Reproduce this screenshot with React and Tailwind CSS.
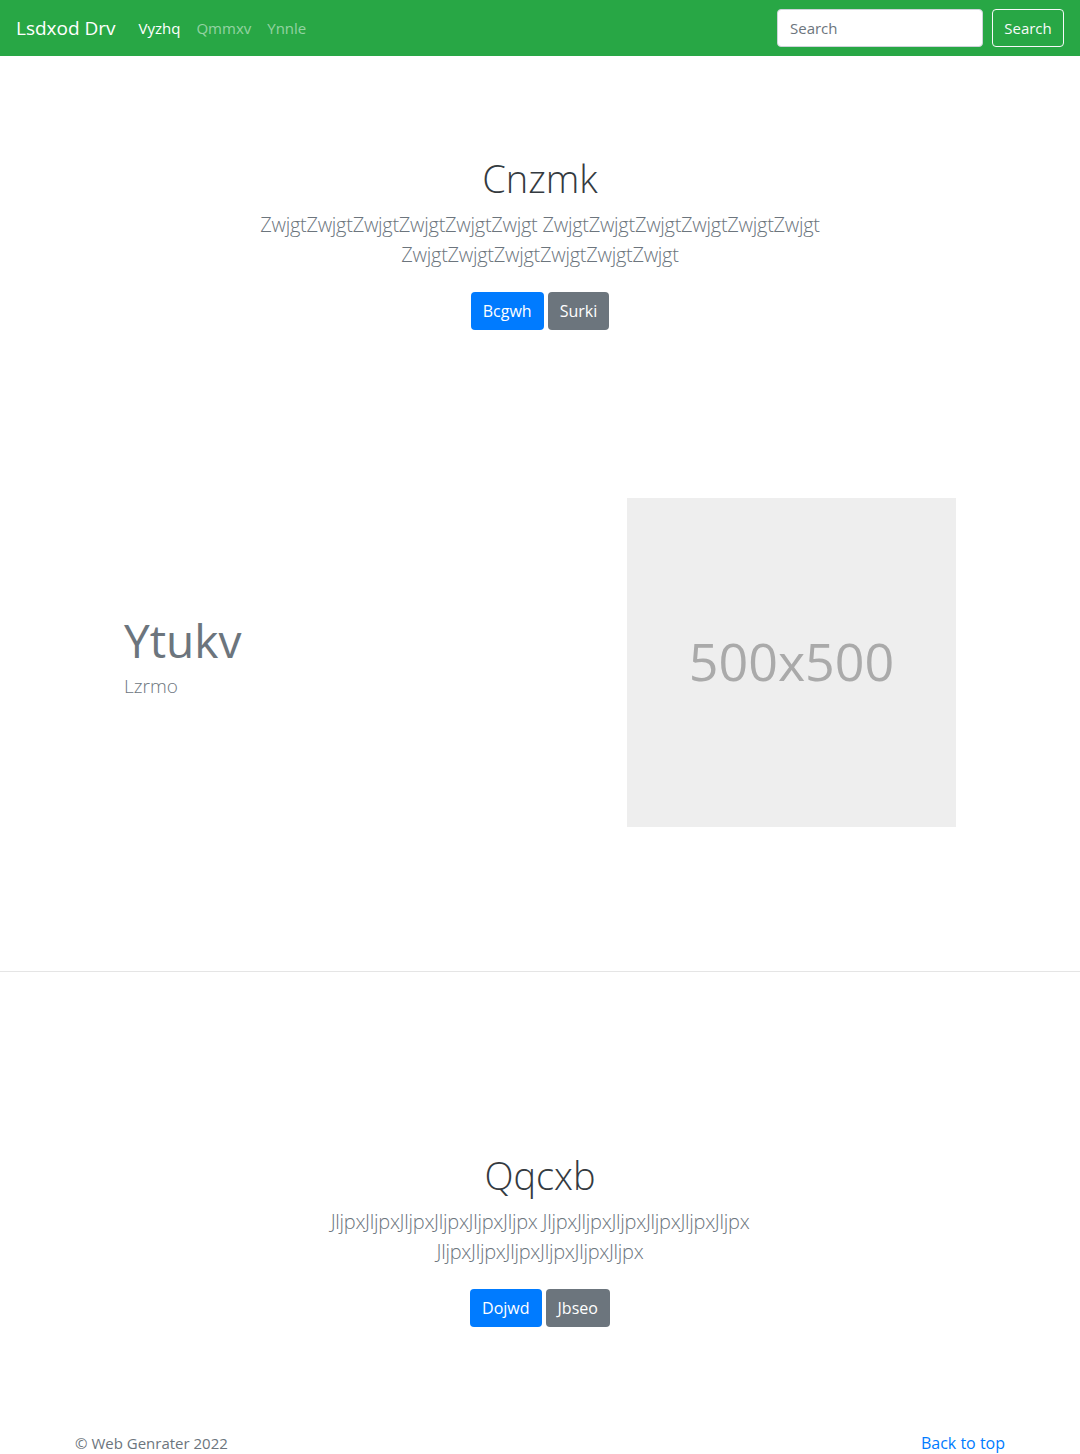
import React from 'react'

const font = { fontFamily: "'Open Sans', 'Noto Sans', sans-serif" }

const Hero = ({ title, word, primary, secondary }) => {
    const line = word.repeat(6)
    return (
        <section className='text-center'>
            <h1 className='text-[38px] leading-[48px] font-light text-[#343a40]'>{title}</h1>
            <p className='mx-auto mt-2 w-[600px] text-[20px] leading-[30px] font-light tracking-[-0.27px] text-[#6c757d]'>
                {line} {line} {line}
            </p>
            <div className='mt-[22px] flex justify-center gap-1'>
                <button className='h-[38px] rounded bg-[#007bff] px-3 text-base text-white'>{primary}</button>
                <button className='h-[38px] rounded bg-[#6c757d] px-3 text-base text-white'>{secondary}</button>
            </div>
        </section>
    )
}

const App = () => {
    return (
        <div className='min-h-[1454px] bg-white' style={font}>
            <nav className='flex h-14 items-center bg-[#28a745] px-4'>
                <span className='mr-[15px] text-[19px] leading-[30px] text-white'>Lsdxod Drv</span>
                <div className='flex text-[15px]'>
                    <a className='px-2 text-white'>Vyzhq</a>
                    <a className='px-2 text-white/50'>Qmmxv</a>
                    <a className='px-2 text-white/50'>Ynnle</a>
                </div>
                <div className='ml-auto flex items-center gap-[9px]'>
                    <input
                        placeholder='Search'
                        className='h-[38px] w-[206px] rounded border border-[#ced4da] bg-white px-3 text-[15px] text-[#495057] placeholder:text-[#6c757d] outline-none'
                    />
                    <button className='h-[38px] w-[72px] rounded border border-[#f8f9fa] text-[15px] text-[#f8f9fa]'>Search</button>
                </div>
            </nav>

            <div className='pt-[98px]'>
                <Hero title='Cnzmk' word='Zwjgt' primary='Bcgwh' secondary='Surki' />
            </div>

            <section className='mt-[168px] flex items-center'>
                <div className='w-[627px] pl-[124px]'>
                    <h2 className='text-[46px] leading-[62px] text-[#6c757d]'>Ytukv</h2>
                    <p className='mb-4 text-[19px] leading-[30px] font-light text-[#6c757d]'>Lzrmo</p>
                </div>
                <div className='flex h-[329px] w-[329px] items-center justify-center bg-[#eeeeee]'>
                    <span className='-mt-1 text-[52px] text-[#aaaaaa]'>500x500</span>
                </div>
            </section>

            <hr className='mt-[144px] border-t border-[#e5e5e5]' />

            <div className='pt-[179px]'>
                <Hero title='Qqcxb' word='Jljpx' primary='Dojwd' secondary='Jbseo' />
            </div>

            <footer className='mx-auto mt-[104px] flex w-[960px] justify-between px-[15px] text-[15px] leading-6'>
                <span className='text-[#6c757d]'>© Web Genrater 2022</span>
                <a className='text-base text-[#007bff]'>Back to top</a>
            </footer>
        </div>
    )
}

export default App
